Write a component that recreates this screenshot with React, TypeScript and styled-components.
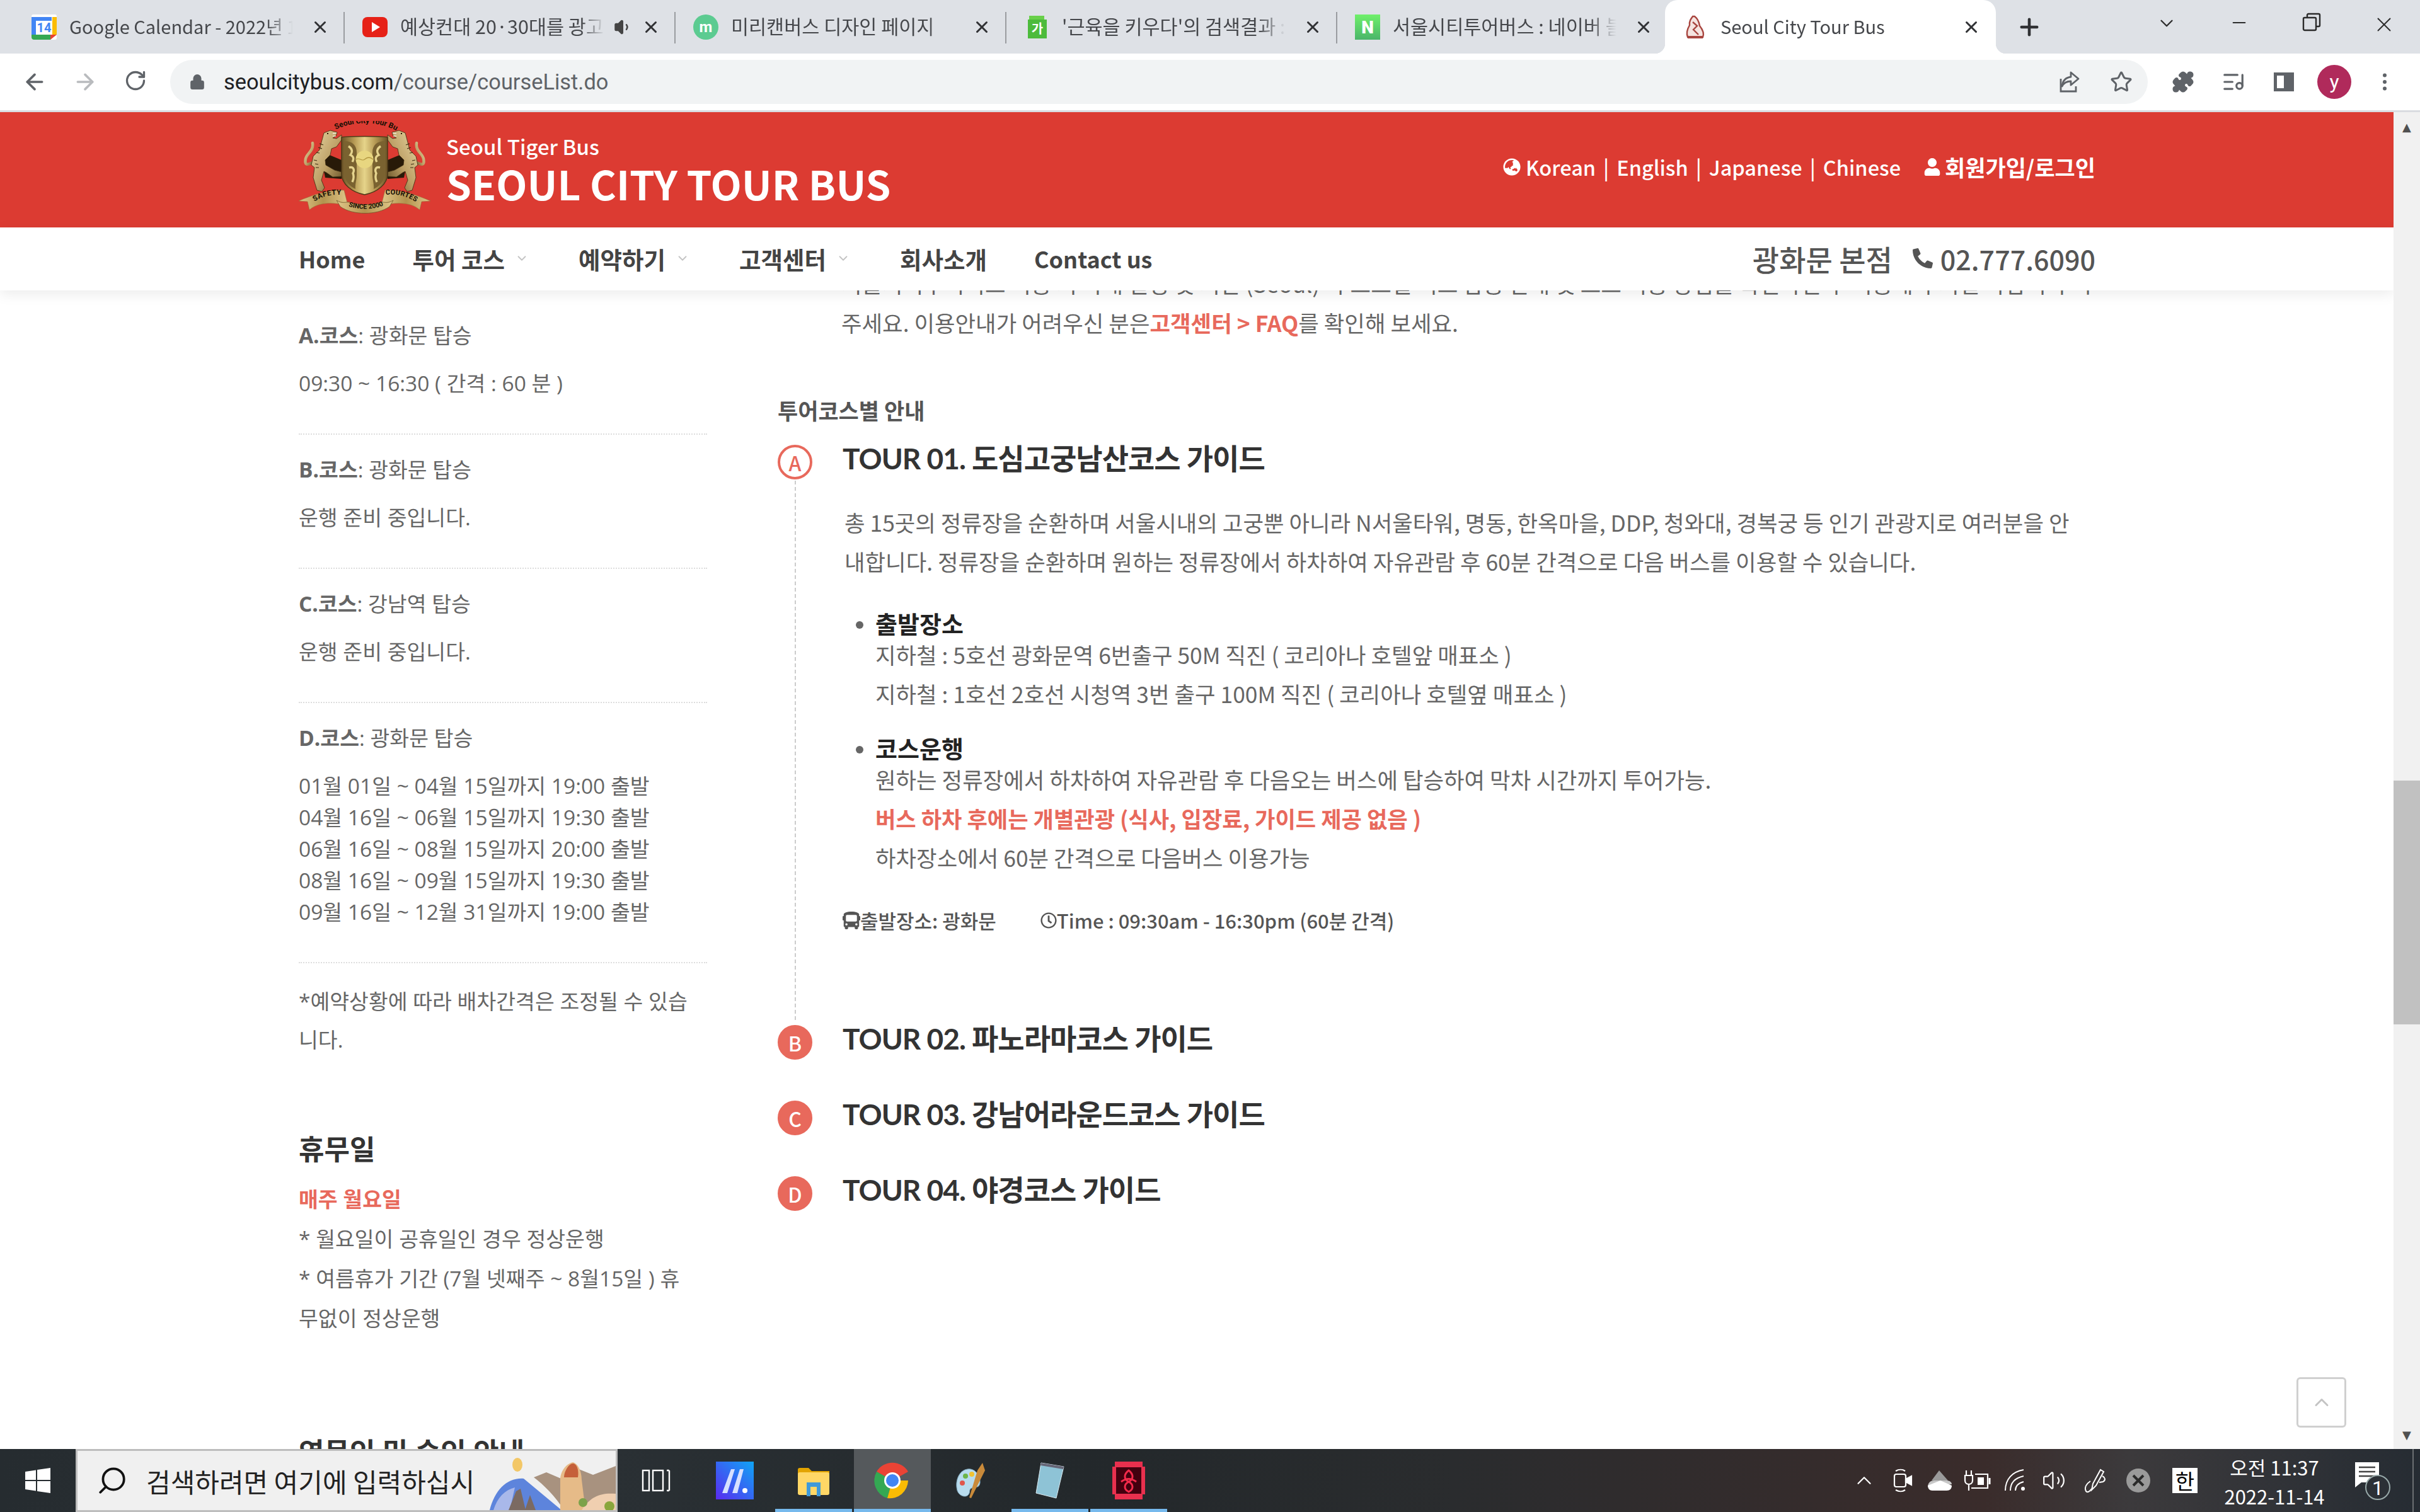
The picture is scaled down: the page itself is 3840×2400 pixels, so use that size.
import React from "react";
import styled, { createGlobalStyle } from "styled-components";
import {
  ArrowLeft,
  ArrowRight,
  RotateCw,
  Lock,
  Star,
  Puzzle,
  ListMusic,
  MoreVertical,
  X,
  Plus,
  ChevronDown,
  ChevronUp,
  Minus,
  Search,
  Volume1,
  Volume2,
} from "lucide-react";
import { FaGlobeAsia, FaUser, FaPhoneAlt, FaBus, FaRegClock } from "react-icons/fa";

const KR = `"Noto Sans CJK KR", "Noto Sans", sans-serif`;
const SIDE = `"Open Sans", "Noto Sans CJK KR", sans-serif`;
const TITLE = `Lato, "Noto Sans CJK KR", sans-serif`;

const GlobalStyle = createGlobalStyle`
  html, body { margin: 0; padding: 0; background: #fff; }
  * { box-sizing: border-box; }
`;

const Screen = styled.div`
  width: 3840px;
  height: 2400px;
  display: flex;
  flex-direction: column;
  overflow: hidden;
  position: relative;
  font-family: ${KR};
`;

/* chrome tabs */
const TabStrip = styled.div`
  height: 85px;
  background: #dee1e6;
  display: flex;
  align-items: stretch;
  padding-left: 22px;
  flex-shrink: 0;
`;

const Tab = styled.div<{ $divider?: boolean }>`
  width: 525px;
  display: flex;
  align-items: center;
  padding: 0 24px 0 28px;
  position: relative;
  ${(p) =>
    p.$divider &&
    `&::after {
      content: "";
      position: absolute;
      right: 0;
      top: 19px;
      height: 50px;
      width: 2px;
      background: #9a9ca0;
    }`}
`;

const ActiveTab = styled(Tab)`
  margin-left: -5px;
  background: #fff;
  border-radius: 20px 20px 0 0;
  &::before,
  &::after {
    content: "";
    position: absolute;
    bottom: 0;
    width: 16px;
    height: 16px;
  }
  &::before {
    left: -16px;
    background: radial-gradient(circle at 0 0, transparent 16px, #fff 16.5px);
  }
  &::after {
    right: -16px;
    background: radial-gradient(circle at 100% 0, transparent 16px, #fff 16.5px);
  }
`;

const Favicon = styled.span`
  width: 40px;
  height: 40px;
  flex-shrink: 0;
  display: flex;
`;

const TabTitle = styled.span<{ $ko?: boolean }>`
  flex: 1;
  min-width: 0;
  margin: -3px 0 0 20px;
  font-size: ${(p) => (p.$ko ? 30.5 : 29)}px;
  color: #45474b;
  white-space: nowrap;
  overflow: hidden;
  -webkit-mask-image: linear-gradient(to right, #000 88%, transparent);
  mask-image: linear-gradient(to right, #000 88%, transparent);
`;

const TabClose = styled.span`
  display: flex;
  margin-left: 28px;
  color: #303134;
`;

const TabSound = styled.span`
  display: flex;
  margin: 0 -14px 0 14px;
  color: #444;
`;

const NewTab = styled.span`
  display: flex;
  align-items: center;
  margin-left: 32px;
  color: #303134;
`;

const WindowButtons = styled.div`
  margin-left: auto;
  display: flex;
  align-items: flex-start;
  padding-top: 20px;
  color: #2b2b2b;
`;

const WinBtn = styled.span`
  width: 115px;
  display: flex;
  justify-content: center;
`;

/* url bar */
const Toolbar = styled.div`
  height: 93px;
  flex-shrink: 0;
  background: #fff;
  border-bottom: 3px solid #dadce0;
  display: flex;
  align-items: center;
`;

const NavIcon = styled.span<{ $dim?: boolean }>`
  width: 80px;
  display: flex;
  justify-content: center;
  color: ${(p) => (p.$dim ? "#b9bbbe" : "#5f6368")};
`;

const NavIcons = styled.div`
  display: flex;
  padding-left: 15px;
  width: 270px;
`;

const Omnibox = styled.div`
  width: 3138px;
  height: 70px;
  border-radius: 35px;
  background: #f1f3f4;
  display: flex;
  align-items: center;
  padding: 0 24px 0 30px;
  color: #5f6368;
`;

const UrlText = styled.span`
  margin-left: 29px;
  font-family: Roboto, sans-serif;
  font-size: 34.4px;
  color: #5f6368;
  flex: 1;
`;

const UrlHost = styled.span`
  color: #202124;
`;

const OmniIcon = styled.span`
  display: flex;
  margin-left: 46px;
`;

const Extensions = styled.div`
  display: flex;
  align-items: center;
  padding-left: 16px;
  color: #5f6368;
`;

const ExtIcon = styled.span`
  width: 80px;
  display: flex;
  justify-content: center;
`;

const Avatar = styled.span`
  width: 54px;
  height: 54px;
  border-radius: 50%;
  background: #b02a5b;
  color: #fff;
  font-family: Roboto, sans-serif;
  font-size: 32px;
  display: flex;
  align-items: center;
  justify-content: center;
  margin: 0 13px;
`;

/* page */
const Viewport = styled.div`
  flex: 1;
  min-height: 0;
  display: flex;
`;

const Page = styled.div`
  flex: 1;
  min-width: 0;
  overflow: hidden;
  display: flex;
  flex-direction: column;
`;

const RedHeader = styled.header`
  height: 183px;
  flex-shrink: 0;
  background: #dc3b32;
  padding: 14px 473px 0 474px;
  display: flex;
  align-items: center;
  color: #fff;
`;

const LogoWrap = styled.div`
  width: 212px;
  height: 150px;
  flex-shrink: 0;
  margin-top: -19px;
`;

const Brand = styled.div`
  margin-left: 22px;
  display: flex;
  flex-direction: column;
  margin-top: -18px;
`;

const BrandSmall = styled.span`
  font-size: 33px;
  font-weight: 500;
  line-height: 44px;
`;

const BrandBig = styled.span`
  font-size: 64px;
  font-weight: 700;
  line-height: 72px;
`;

const HeaderLinks = styled.div`
  margin-left: auto;
  margin-top: -24px;
  display: flex;
  align-items: center;
  font-size: 32.5px;
  font-weight: 500;
`;

const LangSep = styled.span`
  margin: 0 12px;
`;

const GlobeMark = styled.span`
  display: flex;
  margin-right: 8px;
`;

const LoginLink = styled.span`
  display: flex;
  align-items: center;
  margin-left: 36px;
  gap: 6px;
  font-size: 35px;
  font-weight: 700;
`;

const NavBar = styled.nav`
  height: 100px;
  flex-shrink: 0;
  background: #fff;
  position: relative;
  z-index: 2;
  padding: 0 473px 2px 474px;
  display: flex;
  align-items: center;
  box-shadow: 0 6px 20px rgba(0, 0, 0, 0.08);
`;

const NavItem = styled.span<{ $ko?: boolean }>`
  font-size: ${(p) => (p.$ko ? 37.5 : 36)}px;
  font-weight: 700;
  color: #444;
  margin-right: 75px;
  display: flex;
  align-items: center;
  gap: 16px;
`;

const NavChevron = styled.span`
  display: flex;
  color: #c4c4c4;
  margin-right: 4px;
`;

const PhoneBox = styled.div`
  margin-left: auto;
  display: flex;
  align-items: center;
  color: #555;
  font-size: 46px;
  font-weight: 500;
`;

const PhoneNum = styled.span`
  display: flex;
  align-items: center;
  gap: 12px;
  margin-left: 32px;
  font-size: 43px;
`;

const Content = styled.div`
  margin-top: -42px;
  padding-left: 474px;
  display: flex;
  align-items: flex-start;
  position: relative;
  z-index: 1;
`;

/* left column */
const Sidebar = styled.aside`
  width: 648px;
  flex-shrink: 0;
  padding-top: 58px;
  font-family: ${SIDE};
  font-size: 33.5px;
  color: #666;
`;

const SideBlock = styled.div<{ $last?: boolean }>`
  padding: 30px 0 ${(p) => (p.$last ? 0 : 55)}px;
  border-bottom: ${(p) => (p.$last ? "none" : "2px dotted #ddd")};
`;

const SideLine = styled.div<{ $gap?: number }>`
  line-height: 50px;
  margin-top: ${(p) => p.$gap ?? 0}px;
  white-space: nowrap;
`;

const Note = styled.div`
  line-height: 61px;
  white-space: nowrap;
`;

const SideHeading = styled.h3<{ $top: number }>`
  margin: ${(p) => p.$top}px 0 18px;
  font-family: ${SIDE};
  font-size: 44px;
  font-weight: 600;
  line-height: 60px;
  color: #333;
`;

const HolidayLine = styled.div<{ $red?: boolean }>`
  line-height: 63px;
  white-space: nowrap;
  color: ${(p) => (p.$red ? "#e8695c" : "#666")};
  font-weight: ${(p) => (p.$red ? 700 : 400)};
`;

/* right column */
const Main = styled.main`
  margin-left: 112px;
  width: 2091px;
  flex-shrink: 0;
  color: #666;
  font-size: 35.4px;
`;

const Intro = styled.p`
  margin: 0 0 0 101px;
  line-height: 62px;
  white-space: nowrap;
`;

const RedLink = styled.b`
  color: #e8695c;
`;

const GuideLabel = styled.div`
  margin: 88px 0 27px;
  font-size: 35px;
  font-weight: 700;
  line-height: 40px;
  color: #555;
`;

const Course = styled.div`
  display: grid;
  grid-template-columns: 55px 1fr;
  column-gap: 48px;
`;

const Rail = styled.div`
  display: flex;
  flex-direction: column;
  align-items: center;
`;

const Badge = styled.span<{ $open?: boolean }>`
  width: 55px;
  height: 55px;
  border-radius: 50%;
  flex-shrink: 0;
  margin-top: 8px;
  display: flex;
  align-items: center;
  justify-content: center;
  font-size: 32px;
  font-weight: 500;
  color: ${(p) => (p.$open ? "#e8695c" : "#fff")};
  background: ${(p) => (p.$open ? "#fff" : "#e8695c")};
  border: 4px solid #e8695c;
`;

const DashLine = styled.span`
  flex: 1;
  width: 0;
  border-left: 2px dashed #ccc;
  margin-top: 2px;
`;

const CourseBody = styled.div<{ $pad: number }>`
  padding-bottom: ${(p) => p.$pad}px;
`;

const CourseTitle = styled.h2`
  margin: 0;
  font-family: ${TITLE};
  font-size: 46px;
  font-weight: 700;
  line-height: 60px;
  letter-spacing: -1px;
  color: #333;
`;

const CoursePara = styled.p`
  margin: 40px 0 0 3px;
  line-height: 62px;
  white-space: nowrap;
`;

const Bullets = styled.ul<{ $top: number }>`
  list-style: none;
  margin: ${(p) => p.$top}px 0 0 52px;
  padding: 0;
`;

const BulletHead = styled.li`
  font-size: 38px;
  font-weight: 700;
  line-height: 38px;
  color: #222;
  position: relative;
  &::before {
    content: "";
    position: absolute;
    left: -31px;
    top: 16px;
    width: 12px;
    height: 12px;
    border-radius: 50%;
    background: #666;
  }
`;

const BulletLine = styled.div<{ $red?: boolean }>`
  line-height: 62px;
  white-space: nowrap;
  color: ${(p) => (p.$red ? "#e8695c" : "#666")};
  font-weight: ${(p) => (p.$red ? 700 : 400)};
  font-size: ${(p) => (p.$red ? 35.2 : 35.4)}px;
`;

const InfoRow = styled.div`
  margin-top: 49px;
  display: flex;
  align-items: center;
  font-size: 31px;
  font-weight: 500;
  line-height: 40px;
  color: #555;
`;

const InfoItem = styled.span`
  display: flex;
  align-items: center;
  margin-right: 70px;
`;

/* overlay button */
const TopButton = styled.span`
  position: absolute;
  left: 3644px;
  top: 2186px;
  width: 79px;
  height: 80px;
  border: 3px solid #d0d0d0;
  border-radius: 6px;
  background: #fff;
  color: #c4c4c4;
  display: flex;
  align-items: center;
  justify-content: center;
  z-index: 4;
`;

const Scrollbar = styled.div`
  width: 42px;
  flex-shrink: 0;
  background: #f1f1f1;
  display: flex;
  flex-direction: column;
  align-items: center;
  color: #505050;
  padding-top: 14px;
`;

const ScrollArrow = styled.span`
  font-size: 18px;
  line-height: 20px;
  font-family: "DejaVu Sans", sans-serif;
`;

const ScrollThumb = styled.div`
  width: 100%;
  height: 387px;
  background: #c1c1c1;
  margin-top: 1027px;
  margin-bottom: auto;
`;

const ScrollArrowBottom = styled(ScrollArrow)`
  margin-bottom: 12px;
`;

/* taskbar */
const Taskbar = styled.footer`
  height: 100px;
  flex-shrink: 0;
  background: linear-gradient(90deg, #262c30 0%, #2a3034 25%, #23282b 45%, #2a2c2e 60%, #3a2c2b 82%, #3c3a3c 88%, #262c33 100%);
  display: flex;
  align-items: stretch;
  position: relative;
  z-index: 5;
`;

const StartBtn = styled.span`
  width: 120px;
  display: flex;
  align-items: center;
  justify-content: center;
`;

const SearchBox = styled.div`
  width: 860px;
  background: #f0f0f0;
  border: 3px solid #bdbdbd;
  display: flex;
  align-items: center;
  padding-left: 30px;
  position: relative;
  overflow: hidden;
  color: #111;
`;

const SearchIconFlip = styled.span`
  display: flex;
  transform: scaleX(-1);
`;

const SearchText = styled.span`
  margin-left: 29px;
  font-size: 42px;
  color: #222;
  white-space: nowrap;
`;

const SearchArt = styled.span`
  position: absolute;
  right: 0;
  top: 0;
  display: flex;
`;

const TaskSlots = styled.div`
  display: flex;
  gap: 3px;
`;

const TaskSlot = styled.span<{ $on?: boolean; $run?: boolean }>`
  width: 122px;
  display: flex;
  align-items: center;
  justify-content: center;
  position: relative;
  background: ${(p) => (p.$on ? "#55595c" : "transparent")};
  color: #fff;
  ${(p) =>
    p.$run &&
    `&::after {
      content: "";
      position: absolute;
      left: 0;
      right: 0;
      bottom: 0;
      height: 5px;
      background: #76b9ed;
    }`}
`;

const Tray = styled.div`
  margin-left: auto;
  display: flex;
  align-items: center;
  color: #fff;
  position: relative;
  &::after {
    content: "";
    position: absolute;
    right: 10px;
    top: 0;
    bottom: 0;
    width: 2px;
    background: #6b6f72;
  }
`;

const TrayIcon = styled.span<{ $w: number }>`
  width: ${(p) => p.$w}px;
  display: flex;
  justify-content: center;
`;

const ImeBox = styled.span`
  width: 40px;
  height: 40px;
  background: #fff;
  color: #000;
  font-size: 33px;
  line-height: 40px;
  text-align: center;
  margin: 0 27px 0 22px;
`;

const Clock = styled.div`
  width: 190px;
  text-align: center;
  font-size: 31px;
  line-height: 46px;
  color: #fff;
  padding-top: 3px;
`;

const NoteIcon = styled.span`
  width: 80px;
  margin: 0 34px 0 22px;
  display: flex;
  justify-content: center;
`;

const CalendarIcon = () => (
  <svg width="40" height="40" viewBox="0 0 40 40">
    <rect width="40" height="40" rx="3" fill="#fff" />
    <path d="M0 8a4 4 0 0 1 4-4h28v6H0z" fill="#4285f4" />
    <rect x="0" y="4" width="7" height="28" fill="#4285f4" />
    <rect x="33" y="4" width="7" height="28" fill="#fbbc04" />
    <path d="M0 32h30v8H4a4 4 0 0 1-4-4z" fill="#34a853" />
    <path d="M30 32h10l-10 8z" fill="#ea4335" />
    <text x="20" y="28" textAnchor="middle" fontFamily="Roboto" fontSize="20" fontWeight="700" fill="#4285f4">14</text>
  </svg>
);

const YoutubeIcon = () => (
  <svg width="40" height="40" viewBox="0 0 40 40">
    <rect y="4" width="40" height="32" rx="8" fill="#e62117" />
    <path d="M15 12l13 8-13 8z" fill="#fff" />
  </svg>
);

const MiriIcon = () => (
  <svg width="40" height="40" viewBox="0 0 40 40">
    <circle cx="20" cy="20" r="20" fill="#5ccb91" />
    <text x="20" y="28" textAnchor="middle" fontFamily="Roboto" fontSize="24" fontWeight="700" fill="#fff">m</text>
  </svg>
);

const GanaIcon = () => (
  <svg width="40" height="40" viewBox="0 0 40 40">
    <path d="M8 2h24v8h-24z" fill="#69d04a" />
    <rect x="6" y="8" width="30" height="30" fill="#4cbb3c" />
    <text x="21" y="30" textAnchor="middle" fontFamily="Noto Sans CJK KR" fontSize="20" fontWeight="700" fill="#fff">가</text>
  </svg>
);

const NaverIcon = () => (
  <svg width="40" height="40" viewBox="0 0 40 40">
    <defs>
      <linearGradient id="nv" x1="0" y1="0" x2="0" y2="1">
        <stop offset="0" stopColor="#6ff06a" />
        <stop offset="1" stopColor="#4ab56a" />
      </linearGradient>
    </defs>
    <rect width="40" height="40" fill="url(#nv)" />
    <text x="20" y="30" textAnchor="middle" fontFamily="Roboto" fontSize="28" fontWeight="900" fill="#fff">N</text>
  </svg>
);

const TigerFavicon = () => (
  <svg width="40" height="40" viewBox="0 0 40 40" fill="none" stroke="#a8453f" strokeWidth="2.4">
    <path d="M16 3c-3 4-6 8-5 14-3 5-6 12-3 19h24c3-7-1-13-5-18-1-6-4-12-8-15z" fill="#f5e4e0" />
    <path d="M16 12l7 6-6 6 8 8" />
    <path d="M8 36h24" strokeWidth="4" />
  </svg>
);

const RestoreIcon = () => (
  <svg width="30" height="30" viewBox="0 0 30 30" fill="none" stroke="currentColor" strokeWidth="2.4">
    <rect x="2" y="8" width="20" height="20" rx="2" />
    <path d="M8 8V4a2 2 0 0 1 2-2h16a2 2 0 0 1 2 2v16a2 2 0 0 1-2 2h-4" />
  </svg>
);

const ShareIcon = () => (
  <svg width="38" height="38" viewBox="0 0 38 38" fill="none" stroke="currentColor" strokeWidth="2.8">
    <path d="M6 14v20h24v-8" />
    <path d="M22 4l12 10-12 10v-6C16 18 11 20 8 26c1-9 6-14 14-15z" strokeLinejoin="round" />
  </svg>
);

const SidePanelIcon = () => (
  <svg width="36" height="36" viewBox="0 0 36 36">
    <rect x="2" y="3" width="32" height="30" fill="#5f6368" />
    <rect x="7" y="8" width="11" height="20" fill="#fff" />
  </svg>
);

const TaskViewIcon = () => (
  <svg width="46" height="40" viewBox="0 0 46 40" fill="none" stroke="#fff" strokeWidth="2.4">
    <rect x="2" y="4" width="10" height="32" />
    <rect x="18" y="4" width="16" height="32" />
    <path d="M40 4h4M40 36h4M44 4v32" />
  </svg>
);

/* one side of the crest, mirrored for the other tiger */
const TigerShape = ({ flip }: { flip?: boolean }) => (
  <g transform={flip ? "translate(209 0) scale(-1 1)" : undefined}>
    <path d="M26 64C14 70 9 72 11 60c2-9 13-12 11-25" fill="none" stroke="url(#tigerGold)" strokeWidth="4.5" strokeLinecap="round" />
    <path d="M44 52L38 70l4 20 26 2V62z" fill="#281a08" />
    <path
      d="M40 19l10-4 11 3-2 6-5 3 6 1 8-6v8l-8 11-8 3-2 10-8 8 1 8 14 8 11 3v7l-14 1-10-7-4-2-4 14 5 12-4 6-8-2-6-20 2-16-5-4 3-14 10-10 3-12z"
      fill="url(#tigerGold)"
      stroke="#3d2c10"
      strokeWidth="0.8"
    />
    <path d="M33 36l6 2M31 42l6 2M28 50l5 1M24 62l5 1M26 68l5 1M27 74l5 0" stroke="#3d2c10" strokeWidth="1.2" />
    <path d="M54 20l6-1M54 24l5 0" stroke="#fff" strokeWidth="1.1" />
    <path d="M45 20h2" stroke="#2a1b08" strokeWidth="2" />
  </g>
);

const CrestLogo = () => (
  <svg width="212" height="150" viewBox="0 0 212 150">
    <defs>
      <linearGradient id="tigerGold" x1="0" y1="0" x2="1" y2="1">
        <stop offset="0" stopColor="#e8d8a4" />
        <stop offset="0.55" stopColor="#bda066" />
        <stop offset="1" stopColor="#5c4820" />
      </linearGradient>
      <linearGradient id="shieldGold" x1="0" y1="0" x2="1" y2="0">
        <stop offset="0" stopColor="#6a5226" />
        <stop offset="0.28" stopColor="#b89c56" />
        <stop offset="0.5" stopColor="#e6d48a" />
        <stop offset="0.72" stopColor="#b89c56" />
        <stop offset="1" stopColor="#6a5226" />
      </linearGradient>
      <linearGradient id="ribbonGold" x1="0" y1="0" x2="1" y2="0">
        <stop offset="0" stopColor="#e0c88a" />
        <stop offset="0.5" stopColor="#b2934e" />
        <stop offset="1" stopColor="#e0c88a" />
      </linearGradient>
      <path id="crestArc" d="M58 14C85 0 125 0 152 14" />
      <path id="ribbonL" d="M25 128C38 119 50 117 66 117" />
      <path id="ribbonM" d="M78 135C95 141 115 141 132 135" />
      <path id="ribbonR" d="M138 117C155 115 172 119 188 130" />
    </defs>
    <TigerShape />
    <TigerShape flip />
    <path d="M68 26c2-2 71-2 73 0v58c0 16-16 29-36.500 33C84 113 68 100 68 84z" fill="url(#shieldGold)" stroke="#4c3a18" strokeWidth="1.5" />
    <path d="M73 32c11 0 19 6 19 18v36c0 8-3 15-2 22-10-5-17-13-17-24z" fill="#7a6230" />
    <path d="M136 32c-11 0-19 6-19 18v36c0 8 3 15 2 22 10-5 17-13 17-24z" fill="#7a6230" />
    <path d="M79 40c6 4 7 9 3 14 5 2 6 6 3 11M80 74c7-2 9 4 6 9 2 5 1 10-1 14M130 40c-6 4-7 9-3 14-5 2-6 6-3 11M129 74c-7-2-9 4-6 9-2 5-1 10 1 14" stroke="#e6d48e" strokeWidth="3.4" fill="none" />
    <circle cx="104.500" cy="61" r="14" fill="#e8d680" />
    <path d="M91 61c5-4 9 4 13.500 0s9-4 13.500 0" stroke="#b2963f" strokeWidth="1.2" fill="none" />
    <path d="M0 127c20-9 50-19 72-17l6 24c-28-6-48-4-61 7l-3-13z" fill="url(#ribbonGold)" stroke="#8a6f34" strokeWidth="0.5" />
    <path d="M209 127c-20-9-50-19-72-17l-6 24c28-6 48-4 61 7l3-13z" fill="url(#ribbonGold)" stroke="#8a6f34" strokeWidth="0.5" />
    <path d="M60 126c10 6 14 2 20 3 18 5 32 5 50 0 6-1 10 3 20-3l-6 10c-20 14-58 14-78 0z" fill="url(#ribbonGold)" stroke="#6f5828" strokeWidth="0.8" />
    <text fontFamily="Roboto" fontSize="12" fontWeight="700" fill="#160f04">
      <textPath href="#crestArc" startOffset="1">Seoul City Tour Bus</textPath>
    </text>
    <text fontFamily="Roboto" fontSize="11.500" fontWeight="700" fill="#160f04" letterSpacing="0.5">
      <textPath href="#ribbonL">SAFETY</textPath>
    </text>
    <text fontFamily="Roboto" fontSize="10.500" fontWeight="700" fill="#160f04">
      <textPath href="#ribbonM" startOffset="1">SINCE 2000</textPath>
    </text>
    <text fontFamily="Roboto" fontSize="11" fontWeight="700" fill="#160f04" letterSpacing="0.3">
      <textPath href="#ribbonR">COURTESY</textPath>
    </text>
  </svg>
);

const WindowsLogo = () => (
  <svg width="40" height="40" viewBox="0 0 40 40" fill="#fff">
    <path d="M0 6l17-2.500V19H0zM19 3l21-3v19H19zM0 21h17v15.500L0 34zM19 21h21v19l-21-3z" />
  </svg>
);

const SearchScene = () => (
  <svg width="200" height="94" viewBox="0 0 200 94">
    <ellipse cx="44" cy="22" rx="8" ry="11" fill="#f3c766" />
    <path d="M0 94C8 62 28 42 54 44l60 50z" fill="#5d84dc" />
    <path d="M6 94C12 74 24 62 40 58l-8 36z" fill="#a9b8ea" />
    <path d="M30 94l12-30 7-4 8 34zM56 94l8-24 9 24z" fill="#7b6a62" />
    <path d="M70 42l20-8 28 12 16-20 30 12 36-14v70H118C104 72 86 54 70 42z" fill="#a8927f" />
    <path d="M112 94V46c0-14 10-26 20-28 8 2 14 14 14 28l6 48z" fill="#e6bb88" />
    <path d="M118 42c0-10 8-22 14-22s10 10 8 22z" fill="#c5603a" />
    <path d="M146 94c14-22 30-28 54-26v26z" fill="#f0cfb0" />
    <circle cx="148" cy="82" r="7" fill="#7ca24a" />
    <circle cx="190" cy="88" r="8" fill="#8aa63c" />
  </svg>
);

const ChromeLogo = () => (
  <svg width="60" height="60" viewBox="0 0 60 60">
    <path d="M30 30L5 16A29 29 0 0 1 55 16z" fill="#ea4335" />
    <path d="M30 30L5 16A29 29 0 0 0 22 58z" fill="#34a853" />
    <path d="M30 30h25A29 29 0 0 1 22 58z" fill="#fbbc04" />
    <circle cx="30" cy="30" r="13" fill="#fff" />
    <circle cx="30" cy="30" r="10" fill="#4285f4" />
  </svg>
);

const AppStudio = () => (
  <svg width="60" height="60" viewBox="0 0 60 60">
    <defs>
      <linearGradient id="ms" x1="1" y1="0" x2="0" y2="1">
        <stop offset="0" stopColor="#0fa5f5" />
        <stop offset="1" stopColor="#5a2af0" />
      </linearGradient>
    </defs>
    <rect width="60" height="60" fill="url(#ms)" />
    <path d="M10 50L24 12h6L18 50zM26 50L38 12h6L34 50z" fill="#d7e0ff" />
    <circle cx="46" cy="46" r="4" fill="#fff" />
  </svg>
);

const FolderIcon = () => (
  <svg width="54" height="54" viewBox="0 0 54 54">
    <path d="M2 10a3 3 0 0 1 3-3h14l5 5h28v10H2z" fill="#e3a400" />
    <rect x="2" y="14" width="50" height="36" rx="3" fill="#ffd766" />
    <path d="M16 52V30h22v22h-6V37H22v15z" fill="#3f9ad9" />
  </svg>
);

const PaintIcon = () => (
  <svg width="56" height="60" viewBox="0 0 56 60">
    <path d="M22 12C8 14 2 32 6 46c3 9 14 12 18 6 3-4 0-8 5-10 6-2 12 0 13-8 1-12-8-24-20-22z" fill="#b8dcee" stroke="#7ea7bd" />
    <circle cx="14" cy="34" r="4" fill="#e0574c" />
    <circle cx="19" cy="23" r="4" fill="#6cb648" />
    <circle cx="29" cy="20" r="4" fill="#f1c232" />
    <path d="M46 2l4 12-22 44-3-1 13-43z" fill="#c98a3a" />
  </svg>
);

const NotepadIcon = () => (
  <svg width="56" height="60" viewBox="0 0 56 60">
    <path d="M14 2l36 6-12 50-32-8z" fill="#8ec3d6" stroke="#dbeaf0" />
    <path d="M14 2l36 6-1 4-36-6z" fill="#667" />
  </svg>
);

const RedAppIcon = () => (
  <svg width="56" height="60" viewBox="0 0 56 60">
    <rect x="6" y="0" width="44" height="60" fill="#e9304e" />
    <rect x="2" y="8" width="52" height="44" fill="#e9304e" />
    <rect x="8" y="9" width="40" height="42" fill="#43000f" />
    <path d="M28 14c-8 6-8 14 0 18 8 4 8 12 0 16-8-4-8-12 0-16 8-4 8-12 0-18zM16 32c8-6 16-6 24 0" fill="none" stroke="#f2294a" strokeWidth="3" />
  </svg>
);

const MeetTray = () => (
  <svg width="40" height="40" viewBox="0 0 40 40" fill="none" stroke="#fff" strokeWidth="2.2">
    <rect x="8" y="10" width="18" height="20" rx="3" />
    <path d="M26 18l9-5v14l-9-5z" fill="#fff" />
    <path d="M10 5c5-3 11-3 15 0M10 35c5 3 11 3 15 0" />
  </svg>
);

const OneDriveTray = () => (
  <svg width="42" height="40" viewBox="0 0 42 40">
    <path d="M8 20l12-16 14 16z" fill="#9a9a9a" />
    <path d="M2 30c0-6 4-10 10-10l20 0c5 0 8 3 8 6z" fill="#c8c8c8" />
    <path d="M2 28l20-8 18 8c0 5-3 8-8 8H9c-4 0-7-3-7-8z" fill="#fff" />
  </svg>
);

const PowerTray = () => (
  <svg width="44" height="40" viewBox="0 0 44 40" fill="none" stroke="#fff" strokeWidth="2.2">
    <path d="M4 4v8M12 4v8M2 12h12v8c0 4-3 6-6 6s-6-2-6-6zM8 26v10" />
    <path d="M18 10h20v22H12" />
    <rect x="22" y="15" width="10" height="12" fill="#fff" stroke="none" />
    <path d="M41 16v10" strokeWidth="3" />
  </svg>
);

const WifiTray = () => (
  <svg width="38" height="40" viewBox="0 0 38 40" fill="none" stroke="#fff" strokeWidth="2">
    <path d="M3 36C3 18 14 6 32 3M11 36c0-12 7-20 21-23M19 36c0-7 5-12 13-14" />
    <circle cx="31" cy="33" r="3" fill="#fff" stroke="none" />
  </svg>
);

const PenTray = () => (
  <svg width="42" height="42" viewBox="0 0 42 42" fill="none" stroke="#fff" strokeWidth="2">
    <path d="M14 36l2-10L28 4l5 3-12 22z" />
    <path d="M12 22C6 26 2 32 5 38c3 3 6 0 9-4M31 14c4 2 6 6 1 9l-6 1" />
  </svg>
);

const OUR_TABS = [
  { icon: <CalendarIcon />, title: "Google Calendar - 2022년 11월" },
  { icon: <YoutubeIcon />, title: "예상컨대 20·30대를 광고로 움직", muted: true, ko: true },
  { icon: <MiriIcon />, title: "미리캔버스 디자인 페이지", ko: true },
  { icon: <GanaIcon />, title: "'근육을 키우다'의 검색결과 : 네이버", ko: true },
];

const COURSE_RIDES = [
  { name: "B.코스", place: ": 광화문 탑승" },
  { name: "C.코스", place: ": 강남역 탑승" },
];

const D_TIMES = [
  "01월 01일 ~ 04월 15일까지 19:00 출발",
  "04월 16일 ~ 06월 15일까지 19:30 출발",
  "06월 16일 ~ 08월 15일까지 20:00 출발",
  "08월 16일 ~ 09월 15일까지 19:30 출발",
  "09월 16일 ~ 12월 31일까지 19:00 출발",
];

const App: React.FC = () => {
  return (
    <Screen>
      <GlobalStyle />
      <TabStrip>
        {OUR_TABS.map((t) => (
          <Tab key={t.title} $divider>
            <Favicon>{t.icon}</Favicon>
            <TabTitle $ko={t.ko}>{t.title}</TabTitle>
            {t.muted && (
              <TabSound>
                <Volume1 size={30} fill="#444" />
              </TabSound>
            )}
            <TabClose>
              <X size={30} strokeWidth={2.4} />
            </TabClose>
          </Tab>
        ))}
        <Tab>
          <Favicon>
            <NaverIcon />
          </Favicon>
          <TabTitle $ko>서울시티투어버스 : 네이버 블로그</TabTitle>
          <TabClose>
            <X size={30} strokeWidth={2.4} />
          </TabClose>
        </Tab>
        <ActiveTab>
          <Favicon>
            <TigerFavicon />
          </Favicon>
          <TabTitle>Seoul City Tour Bus</TabTitle>
          <TabClose>
            <X size={30} strokeWidth={2.4} />
          </TabClose>
        </ActiveTab>
        <NewTab>
          <Plus size={42} strokeWidth={2.6} />
        </NewTab>
        <WindowButtons>
          <WinBtn>
            <ChevronDown size={34} strokeWidth={1.6} />
          </WinBtn>
          <WinBtn>
            <Minus size={32} strokeWidth={1.6} />
          </WinBtn>
          <WinBtn>
            <RestoreIcon />
          </WinBtn>
          <WinBtn>
            <X size={38} strokeWidth={1.2} />
          </WinBtn>
        </WindowButtons>
      </TabStrip>

      <Toolbar>
        <NavIcons>
          <NavIcon>
            <ArrowLeft size={40} strokeWidth={2.2} />
          </NavIcon>
          <NavIcon $dim>
            <ArrowRight size={40} strokeWidth={2.2} />
          </NavIcon>
          <NavIcon>
            <RotateCw size={36} strokeWidth={2.2} />
          </NavIcon>
        </NavIcons>
        <Omnibox>
          <Lock size={26} fill="#5f6368" />
          <UrlText>
            <UrlHost>seoulcitybus.com</UrlHost>/course/courseList.do
          </UrlText>
          <OmniIcon>
            <ShareIcon />
          </OmniIcon>
          <OmniIcon>
            <Star size={36} />
          </OmniIcon>
        </Omnibox>
        <Extensions>
          <ExtIcon>
            <Puzzle size={36} fill="#5f6368" />
          </ExtIcon>
          <ExtIcon>
            <ListMusic size={38} />
          </ExtIcon>
          <ExtIcon>
            <SidePanelIcon />
          </ExtIcon>
          <Avatar>y</Avatar>
          <ExtIcon>
            <MoreVertical size={36} />
          </ExtIcon>
        </Extensions>
      </Toolbar>

      <Viewport>
        <Page>
          <RedHeader>
            <LogoWrap>
              <CrestLogo />
            </LogoWrap>
            <Brand>
              <BrandSmall>Seoul Tiger Bus</BrandSmall>
              <BrandBig>SEOUL CITY TOUR BUS</BrandBig>
            </Brand>
            <HeaderLinks>
              <GlobeMark>
                <FaGlobeAsia size={28} />
              </GlobeMark>
              Korean<LangSep>|</LangSep>English<LangSep>|</LangSep>Japanese<LangSep>|</LangSep>Chinese
              <LoginLink>
                <FaUser size={28} />
                회원가입/로그인
              </LoginLink>
            </HeaderLinks>
          </RedHeader>
          <NavBar>
            <NavItem>Home</NavItem>
            <NavItem $ko>
              투어 코스
              <NavChevron>
                <ChevronDown size={22} />
              </NavChevron>
            </NavItem>
            <NavItem $ko>
              예약하기
              <NavChevron>
                <ChevronDown size={22} />
              </NavChevron>
            </NavItem>
            <NavItem $ko>
              고객센터
              <NavChevron>
                <ChevronDown size={22} />
              </NavChevron>
            </NavItem>
            <NavItem $ko>회사소개</NavItem>
            <NavItem>Contact us</NavItem>
            <PhoneBox>
              광화문 본점
              <PhoneNum>
                <FaPhoneAlt size={32} />
                02.777.6090
              </PhoneNum>
            </PhoneBox>
          </NavBar>

          <Content>
            <Sidebar>
              <SideBlock>
                <SideLine>
                  <b>A.코스</b>: 광화문 탑승
                </SideLine>
                <SideLine $gap={26}>09:30 ~ 16:30 ( 간격 : 60 분 )</SideLine>
              </SideBlock>
              {COURSE_RIDES.map((r) => (
                <SideBlock key={r.name}>
                  <SideLine>
                    <b>{r.name}</b>
                    {r.place}
                  </SideLine>
                  <SideLine $gap={26}>운행 준비 중입니다.</SideLine>
                </SideBlock>
              ))}
              <SideBlock>
                <SideLine>
                  <b>D.코스</b>: 광화문 탑승
                </SideLine>
                <SideLine $gap={26}>{D_TIMES[0]}</SideLine>
                {D_TIMES.slice(1).map((t) => (
                  <SideLine key={t}>{t}</SideLine>
                ))}
              </SideBlock>
              <SideBlock $last>
                <Note>
                  *예약상황에 따라 배차간격은 조정될 수 있습
                  <br />
                  니다.
                </Note>
              </SideBlock>
              <SideHeading $top={113}>휴무일</SideHeading>
              <HolidayLine $red>매주 월요일</HolidayLine>
              <HolidayLine>* 월요일이 공휴일인 경우 정상운행</HolidayLine>
              <HolidayLine>* 여름휴가 기간 (7월 넷째주 ~ 8월15일 ) 휴</HolidayLine>
              <HolidayLine>무없이 정상운행</HolidayLine>
              <SideHeading $top={151}>영문인 및 승인 안내</SideHeading>
            </Sidebar>

            <Main>
              <Intro>서울시티투어버스 이용 시 아래 일정 및 시간 (Seoul) 각 코스별 버스 탑승 안내 및 코스 이용 방법을 확인하신 후 이용해 주시길 바랍니다 꼭</Intro>
              <Intro>
                주세요. 이용안내가 어려우신 분은<RedLink>고객센터 &gt; FAQ</RedLink>를 확인해 보세요.
              </Intro>
              <GuideLabel>투어코스별 안내</GuideLabel>
              <Course>
                <Rail>
                  <Badge $open>A</Badge>
                  <DashLine />
                </Rail>
                <CourseBody $pad={138}>
                  <CourseTitle>TOUR 01. 도심고궁남산코스 가이드</CourseTitle>
                  <CoursePara>
                    총 15곳의 정류장을 순환하며 서울시내의 고궁뿐 아니라 N서울타워, 명동, 한옥마을, DDP, 청와대, 경복궁 등 인기 관광지로 여러분을 안
                    <br />
                    내합니다. 정류장을 순환하며 원하는 정류장에서 하차하여 자유관람 후 60분 간격으로 다음 버스를 이용할 수 있습니다.
                  </CoursePara>
                  <Bullets $top={48}>
                    <BulletHead>출발장소</BulletHead>
                    <BulletLine>지하철 : 5호선 광화문역 6번출구 50M 직진 ( 코리아나 호텔앞 매표소 )</BulletLine>
                    <BulletLine>지하철 : 1호선 2호선 시청역 3번 출구 100M 직진 ( 코리아나 호텔옆 매표소 )</BulletLine>
                  </Bullets>
                  <Bullets $top={36}>
                    <BulletHead>코스운행</BulletHead>
                    <BulletLine>원하는 정류장에서 하차하여 자유관람 후 다음오는 버스에 탑승하여 막차 시간까지 투어가능.</BulletLine>
                    <BulletLine $red>버스 하차 후에는 개별관광 (식사, 입장료, 가이드 제공 없음 )</BulletLine>
                    <BulletLine>하차장소에서 60분 간격으로 다음버스 이용가능</BulletLine>
                  </Bullets>
                  <InfoRow>
                    <InfoItem>
                      <FaBus size={28} />
                      출발장소: 광화문
                    </InfoItem>
                    <InfoItem>
                      <FaRegClock size={26} />
                      Time : 09:30am - 16:30pm (60분 간격)
                    </InfoItem>
                  </InfoRow>
                </CourseBody>
              </Course>
              <Course>
                <Rail>
                  <Badge>B</Badge>
                </Rail>
                <CourseBody $pad={60}>
                  <CourseTitle>TOUR 02. 파노라마코스 가이드</CourseTitle>
                </CourseBody>
              </Course>
              <Course>
                <Rail>
                  <Badge>C</Badge>
                </Rail>
                <CourseBody $pad={60}>
                  <CourseTitle>TOUR 03. 강남어라운드코스 가이드</CourseTitle>
                </CourseBody>
              </Course>
              <Course>
                <Rail>
                  <Badge>D</Badge>
                </Rail>
                <CourseBody $pad={60}>
                  <CourseTitle>TOUR 04. 야경코스 가이드</CourseTitle>
                </CourseBody>
              </Course>
            </Main>
          </Content>
        </Page>
        <Scrollbar>
          <ScrollArrow>▲</ScrollArrow>
          <ScrollThumb />
          <ScrollArrowBottom>▼</ScrollArrowBottom>
        </Scrollbar>
      </Viewport>

      <TopButton>
        <ChevronUp size={36} />
      </TopButton>

      <Taskbar>
        <StartBtn>
          <WindowsLogo />
        </StartBtn>
        <SearchBox>
          <SearchIconFlip>
            <Search size={50} strokeWidth={1.8} />
          </SearchIconFlip>
          <SearchText>검색하려면 여기에 입력하십시</SearchText>
          <SearchArt>
            <SearchScene />
          </SearchArt>
        </SearchBox>
        <TaskSlots>
          <TaskSlot>
            <TaskViewIcon />
          </TaskSlot>
          <TaskSlot>
            <AppStudio />
          </TaskSlot>
          <TaskSlot $run>
            <FolderIcon />
          </TaskSlot>
          <TaskSlot $on $run>
            <ChromeLogo />
          </TaskSlot>
          <TaskSlot>
            <PaintIcon />
          </TaskSlot>
          <TaskSlot $run>
            <NotepadIcon />
          </TaskSlot>
          <TaskSlot $run>
            <RedAppIcon />
          </TaskSlot>
        </TaskSlots>
        <Tray>
          <TrayIcon $w={60}>
            <ChevronUp size={38} strokeWidth={1.4} />
          </TrayIcon>
          <TrayIcon $w={60}>
            <MeetTray />
          </TrayIcon>
          <TrayIcon $w={59}>
            <OneDriveTray />
          </TrayIcon>
          <TrayIcon $w={61}>
            <PowerTray />
          </TrayIcon>
          <TrayIcon $w={59}>
            <WifiTray />
          </TrayIcon>
          <TrayIcon $w={64}>
            <Volume2 size={38} strokeWidth={1.4} />
          </TrayIcon>
          <TrayIcon $w={70}>
            <PenTray />
          </TrayIcon>
          <TrayIcon $w={64}>
            <svg width="40" height="40" viewBox="0 0 40 40">
              <circle cx="20" cy="20" r="19" fill="#9a9a9a" />
              <path d="M12 12l16 16M28 12L12 28" stroke="#2a2a2a" strokeWidth="4" />
            </svg>
          </TrayIcon>
          <ImeBox>한</ImeBox>
          <Clock>
            오전 11:37
            <br />
            2022-11-14
          </Clock>
          <NoteIcon>
            <svg width="66" height="62" viewBox="0 0 66 62">
              <path d="M4 2h38v32H14l-10 8z" fill="#fff" />
              <path d="M10 10h26M10 17h26M10 24h26" stroke="#444" strokeWidth="2.4" />
              <circle cx="40" cy="42" r="19" fill="#2b3036" stroke="#9aa" strokeWidth="2" />
              <text x="40" y="54" textAnchor="middle" fontFamily="Roboto" fontSize="32" fill="#fff">1</text>
            </svg>
          </NoteIcon>
        </Tray>
      </Taskbar>
    </Screen>
  );
};

export default App;
